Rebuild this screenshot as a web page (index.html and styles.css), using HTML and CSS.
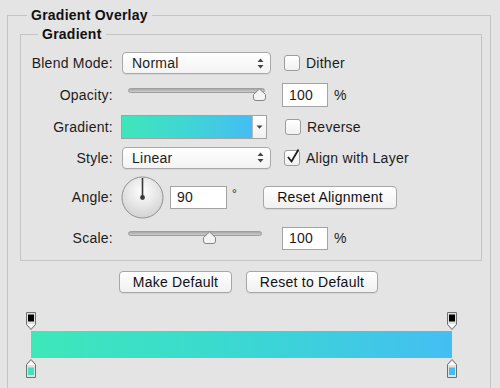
FILE: index.html
```html
<!DOCTYPE html>
<html>
<head>
    <title>Gradient Overlay</title>
    <meta charset="utf-8">
    <link rel="stylesheet" href="styles.css">
</head>
<body>
<fieldset class="panel">
    <legend>Gradient Overlay</legend>

    <fieldset class="group">
        <legend>Gradient</legend>

        <!-- Blend Mode -->
        <div class="row row-a">
            <label class="lbl">Blend Mode:</label>
            <div class="select">Normal
                <svg class="arrows" width="7" height="11" viewBox="0 0 7 11"><path d="M3.5 0.5 L6.5 4 H0.5 Z M3.5 10.5 L6.5 7 H0.5 Z" fill="#444"/></svg>
            </div>
            <span class="check"></span><span class="check-txt">Dither</span>
        </div>

        <!-- Opacity -->
        <div class="row row-a">
            <label class="lbl">Opacity:</label>
            <div class="slider slider-op">
                <div class="track"></div>
                <svg class="thumb" style="left: 124px" width="15" height="13" viewBox="0 0 15 13"><path d="M7.5 1 L13.5 6.5 V10 Q13.5 12.5 11 12.5 H4 Q1.5 12.5 1.5 10 V6.5 Z" fill="#f4f4f4" stroke="#858585"/></svg>
            </div>
            <input class="num num-op" type="text" value="100"><span class="unit">%</span>
        </div>

        <!-- Gradient -->
        <div class="row row-b">
            <label class="lbl">Gradient:</label>
            <div class="swatch">
                <div class="swatch-fill"></div>
                <div class="swatch-btn"><svg width="7" height="4" viewBox="0 0 7 4"><path d="M0.5 0.5 H6.5 L3.5 3.8 Z" fill="#444"/></svg></div>
            </div>
            <span class="check check-rev"></span><span class="check-txt">Reverse</span>
        </div>

        <!-- Style -->
        <div class="row row-b">
            <label class="lbl">Style:</label>
            <div class="select">Linear
                <svg class="arrows" width="7" height="11" viewBox="0 0 7 11"><path d="M3.5 0.5 L6.5 4 H0.5 Z M3.5 10.5 L6.5 7 H0.5 Z" fill="#444"/></svg>
            </div>
            <span class="check checked">
                <svg width="18" height="18" viewBox="0 0 18 18"><path d="M4 9 L7.5 13.5 L14.5 1.5" fill="none" stroke="#1e1e1e" stroke-width="1.8"/></svg>
            </span><span class="check-txt">Align with Layer</span>
        </div>

        <!-- Angle -->
        <div class="row row-c">
            <label class="lbl">Angle:</label>
            <svg class="dial" width="43" height="43" viewBox="0 0 43 43">
                <defs>
                    <radialGradient id="dialbg" cx="0.5" cy="0.35" r="0.6">
                        <stop offset="0" stop-color="#ffffff"/>
                        <stop offset="1" stop-color="#d6d6d6"/>
                    </radialGradient>
                </defs>
                <circle cx="21.5" cy="21.5" r="20.5" fill="url(#dialbg)" stroke="#8f8f8f"/>
                <line x1="21.5" y1="21.5" x2="21.5" y2="2" stroke="#3a3a3a" stroke-width="1.6"/>
                <circle cx="21.5" cy="21.5" r="2.4" fill="#3a3a3a"/>
            </svg>
            <input class="num num-angle" type="text" value="90"><span class="deg">°</span>
            <button class="btn btn-align">Reset Alignment</button>
        </div>

        <!-- Scale -->
        <div class="row row-d">
            <label class="lbl">Scale:</label>
            <div class="slider slider-sc">
                <div class="track"></div>
                <svg class="thumb" style="left: 74px" width="15" height="13" viewBox="0 0 15 13"><path d="M7.5 1 L13.5 6.5 V10 Q13.5 12.5 11 12.5 H4 Q1.5 12.5 1.5 10 V6.5 Z" fill="#f4f4f4" stroke="#858585"/></svg>
            </div>
            <input class="num num-sc" type="text" value="100"><span class="unit">%</span>
        </div>
    </fieldset>

    <div class="actions">
        <button class="btn btn-make">Make Default</button>
        <button class="btn btn-reset">Reset to Default</button>
    </div>

    <!-- stops d'opacite -->
    <div class="stops stops-top">
        <svg width="12" height="18" viewBox="0 0 12 18"><path d="M1.5 0.5 H10.5 V12.5 L6 17.5 L1.5 12.5 Z" fill="#e2e2e2" stroke="#6f6f6f"/><rect x="3" y="2.5" width="6" height="7" fill="#000"/><path d="M2.5 12 H9.5 L6 15.8 Z" fill="#fff"/></svg>
        <svg width="12" height="18" viewBox="0 0 12 18"><path d="M1.5 0.5 H10.5 V12.5 L6 17.5 L1.5 12.5 Z" fill="#e2e2e2" stroke="#6f6f6f"/><rect x="3" y="2.5" width="6" height="7" fill="#000"/><path d="M2.5 12 H9.5 L6 15.8 Z" fill="#fff"/></svg>
    </div>

    <div class="bar"></div>

    <!-- stops de couleur -->
    <div class="stops stops-bottom">
        <svg width="12" height="19" viewBox="0 0 12 19"><path d="M6 0.5 L10.5 5.5 V18.5 H1.5 V5.5 Z" fill="#e2e2e2" stroke="#6f6f6f"/><path d="M6 2.2 L9.4 6 H2.6 Z" fill="#fff"/><rect x="3" y="8.5" width="6" height="7.5" fill="#3fe3bd"/></svg>
        <svg width="12" height="19" viewBox="0 0 12 19"><path d="M6 0.5 L10.5 5.5 V18.5 H1.5 V5.5 Z" fill="#e2e2e2" stroke="#6f6f6f"/><path d="M6 2.2 L9.4 6 H2.6 Z" fill="#fff"/><rect x="3" y="8.5" width="6" height="7.5" fill="#43bdf3"/></svg>
    </div>
</fieldset>
</body>
</html>
```

FILE: styles.css
```css
body {
    margin: 0;
    background-color: #e4e4e4;
    font-family: "Liberation Sans", Arial, sans-serif;
    font-size: 14px;
    letter-spacing: 0.25px;
    color: #1c1c1c;
    overflow: hidden;
}
.panel {
    box-sizing: border-box;
    width: 484px;
    margin: 7px 0 0 7px;
    padding: 3px 8px 30px 12px;
    border: 1px solid #c4c4c4;
}
.panel > legend,
.group > legend {
    padding: 0 4px;
    font-weight: bold;
    line-height: 16px;
    color: #111;
}
.panel > legend {
    margin-left: 7px;
}
.group {
    box-sizing: border-box;
    width: 462px;
    margin: 0;
    padding: 5px 0 5px 0;
    border: 1px solid #c4c4c4;
}
.group > legend {
    margin-left: 17px;
}
.row {
    display: flex;
    align-items: center;
}
.row-a { height: 32px; }
.row-b { height: 31px; }
.row-c { height: 48px; }
.row-d { height: 34px; }
.lbl {
    flex: 0 0 92px;
    margin-right: 9px;
    text-align: right;
}
.select {
    box-sizing: border-box;
    width: 149px;
    height: 22px;
    display: flex;
    align-items: center;
    justify-content: space-between;
    padding: 0 6px 0 9px;
    border: 1px solid #a9a9a9;
    border-radius: 4px;
    background: linear-gradient(#ffffff, #f3f3f3);
    box-shadow: 0 1px 0 rgba(0, 0, 0, 0.06);
}
.check {
    box-sizing: border-box;
    width: 16px;
    height: 16px;
    margin-left: 13px;
    margin-right: 6px;
    border: 1px solid #9c9c9c;
    border-radius: 3px;
    background: linear-gradient(#ffffff, #f1f1f1);
    position: relative;
}
.check-rev {
    margin-left: 18px;
}
.check.checked svg {
    position: absolute;
    left: -1px;
    top: -3px;
}
.slider {
    position: relative;
    height: 14px;
    margin-left: 6px;
}
.slider-op { width: 137px; }
.slider-sc { width: 134px; }
.track {
    box-sizing: border-box;
    height: 5px;
    border: 1px solid #9e9e9e;
    border-radius: 3px;
    background: linear-gradient(#a8a8a8, #cdcdcd);
}
.thumb {
    position: absolute;
    top: 0;
}
.num {
    box-sizing: border-box;
    height: 24px;
    padding: 0 6px;
    border: 1px solid #a4a4a4;
    border-radius: 0;
    background-color: #ffffff;
    font-family: inherit;
    font-size: 14px;
    letter-spacing: 0.25px;
    color: #1c1c1c;
    outline: none;
}
.num-op { width: 46px; margin-left: 17px; }
.num-sc { width: 46px; height: 23px; margin-left: 20px; }
.num-angle { width: 57px; height: 23px; margin-left: 6px; }
.unit {
    margin-left: 6px;
}
.deg {
    margin-left: 5px;
    margin-top: -6px;
    font-size: 12px;
}
.swatch {
    box-sizing: border-box;
    display: flex;
    width: 146px;
    height: 24px;
    margin-left: -1px;
    border: 1px solid #a2a2a2;
    background-color: #ffffff;
}
.swatch-fill {
    flex: 1;
    background: linear-gradient(to right, #3fe6bb, #3fd6d4 50%, #45bdf4);
}
.swatch-btn {
    width: 13px;
    display: flex;
    align-items: center;
    justify-content: center;
    border-left: 1px solid #b8b8b8;
    background: linear-gradient(#ffffff, #f0f0f0);
}
.dial {
    margin-left: -1px;
}
.btn {
    box-sizing: border-box;
    height: 22px;
    padding: 0;
    border: 1px solid #a6a6a6;
    border-radius: 4px;
    background: linear-gradient(#ffffff, #f0f0f0);
    box-shadow: 0 1px 0 rgba(0, 0, 0, 0.06);
    font-family: inherit;
    font-size: 14px;
    letter-spacing: 0.25px;
    color: #111;
}
.btn-align {
    width: 134px;
    height: 23px;
    margin-left: 26px;
}
.actions {
    display: flex;
    gap: 14px;
    margin-top: 10px;
    padding-left: 99px;
}
.btn-make { width: 113px; }
.btn-reset { width: 132px; }
.stops {
    display: flex;
    justify-content: space-between;
    width: 433px;
    margin-left: 5px;
}
.stops svg {
    display: block;
}
.stops-top {
    margin-top: 19px;
    height: 18px;
}
.bar {
    width: 421px;
    height: 27px;
    margin: 1px 0 0 11px;
    background: linear-gradient(to right, #3de8b8, #3ad8d2 50%, #44bef3);
}
.stops-bottom {
    margin-top: 1px;
    height: 19px;
}
```
